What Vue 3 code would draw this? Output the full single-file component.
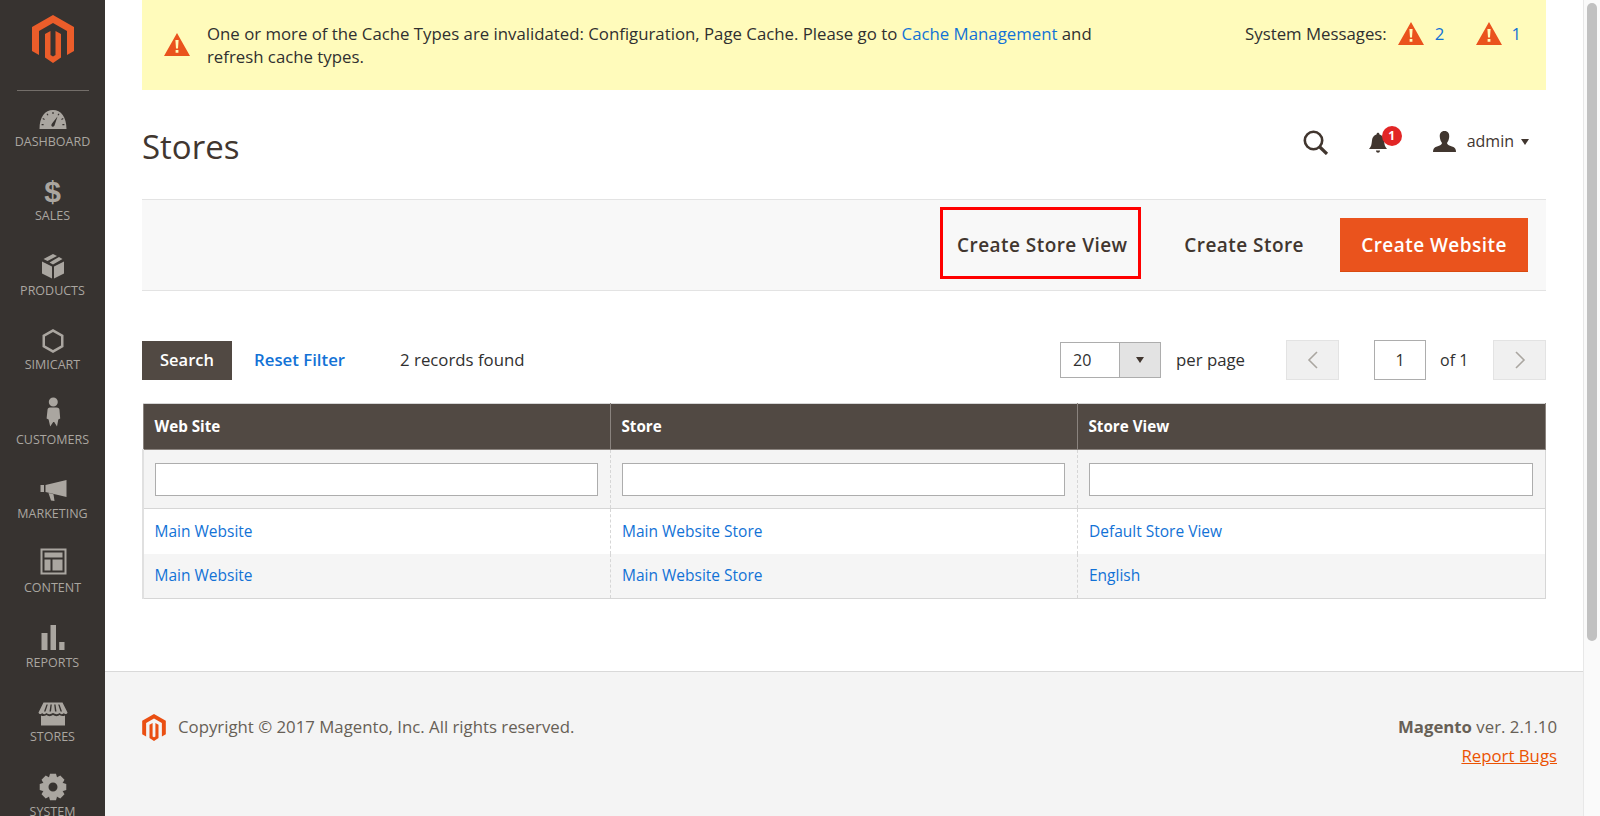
<template>
  <div class="page">
    <!-- sidebar -->
    <aside class="sidebar">
      <div class="logo-wrap">
        <svg class="logo" viewBox="0 0 42 48" width="42" height="48">
          <path :d="logoPath" fill="#eb5d2a" />
        </svg>
      </div>
      <div class="logo-line"></div>
      <div v-for="item in menu" :key="item.label" class="menu-item">
        <div class="menu-icon">
          <span v-if="item.glyph" class="glyph">{{ item.glyph }}</span>
          <svg v-else viewBox="0 0 30 28" width="30" height="28">
            <path :d="item.d" fill="#aaa6a0" fill-rule="evenodd" />
          </svg>
        </div>
        <div class="menu-label">{{ item.label }}</div>
      </div>
    </aside>

    <div class="main">
      <div class="content">
        <!-- system message -->
        <div class="notice">
          <svg class="warn notice-icon" viewBox="0 0 26 23" width="26" height="23">
            <path :d="warnPath" fill="#ea531d" fill-rule="evenodd" />
          </svg>
          <div class="notice-text">
            One or more of the Cache Types are invalidated: Configuration, Page Cache. Please go to
            <a class="link">Cache Management</a> and refresh cache types.
          </div>
          <div class="sys-messages">
            <span>System Messages:</span>
            <svg class="warn warn-a" viewBox="0 0 26 23" width="26" height="23">
              <path :d="warnPath" fill="#ea531d" fill-rule="evenodd" />
            </svg>
            <a class="link count">2</a>
            <svg class="warn warn-b" viewBox="0 0 26 23" width="26" height="23">
              <path :d="warnPath" fill="#ea531d" fill-rule="evenodd" />
            </svg>
            <a class="link count">1</a>
          </div>
        </div>

        <!-- title and admin actions -->
        <div class="title-row">
          <h1 class="title">Stores</h1>
          <div class="admin-actions">
            <svg class="search-icon" viewBox="0 0 26 25" width="26" height="25">
              <circle cx="10.5" cy="10.5" r="8.7" fill="none" stroke="#41362f" stroke-width="2.6" />
              <path d="M16.8 17 L24 24" stroke="#41362f" stroke-width="3.2" fill="none" />
            </svg>
            <div class="bell">
              <svg viewBox="0 0 18 21" width="18" height="21">
                <path d="M0 17 C2.5 14.5 2.5 12 3 8.5 C3.5 4.5 6 3 7.5 2.6 C7.5 0 10.5 0 10.5 2.6 C12 3 14.5 4.5 15 8.5 C15.5 12 15.5 14.5 18 17 Z M7 18.5 H11 C11 21.5 7 21.5 7 18.5 Z" fill="#41362f" />
              </svg>
              <span class="badge">1</span>
            </div>
            <svg class="user-icon" viewBox="0 0 23 21" width="23" height="21">
              <path d="M11.5 0 C15 0 16.5 2.5 16.2 6 C16 8.5 15 10.5 14 12 C14 13.5 16 14.5 19 15.5 C22 16.5 23 18 23 21 H0 C0 18 1 16.5 4 15.5 C7 14.5 9 13.5 9 12 C8 10.5 7 8.5 6.8 6 C6.5 2.5 8 0 11.5 0 Z" fill="#41362f" />
            </svg>
            <span class="admin-name">admin</span>
            <span class="caret"></span>
          </div>
        </div>

        <!-- page actions -->
        <div class="page-actions">
          <button class="action-btn highlighted">Create Store View</button>
          <button class="action-btn plain">Create Store</button>
          <button class="action-btn primary">Create Website</button>
        </div>

        <!-- grid toolbar -->
        <div class="toolbar">
          <button class="search-btn">Search</button>
          <a class="reset">Reset Filter</a>
          <span class="records">2 records found</span>
          <div class="pager">
            <div class="per-select">
              <span class="per-value">20</span>
              <span class="per-arrow"><i></i></span>
            </div>
            <span class="per-label">per page</span>
            <div class="page-btn prev">
              <svg viewBox="0 0 12 20" width="12" height="20"><path d="M10 2 L2 10 L10 18" fill="none" stroke="#aaa6a0" stroke-width="1.6" /></svg>
            </div>
            <div class="page-input">1</div>
            <span class="page-of">of 1</span>
            <div class="page-btn next">
              <svg viewBox="0 0 12 20" width="12" height="20"><path d="M2 2 L10 10 L2 18" fill="none" stroke="#aaa6a0" stroke-width="1.6" /></svg>
            </div>
          </div>
        </div>

        <!-- stores grid -->
        <table class="grid">
          <thead>
            <tr>
              <th v-for="col in columns" :key="col">{{ col }}</th>
            </tr>
          </thead>
          <tbody>
            <tr class="filters">
              <td v-for="col in columns" :key="col"><input class="filter-input" type="text" /></td>
            </tr>
            <tr v-for="(row, i) in rows" :key="i" :class="{ alt: i % 2 === 1 }">
              <td v-for="cell in row" :key="cell"><a class="link">{{ cell }}</a></td>
            </tr>
          </tbody>
        </table>
      </div>

      <!-- footer -->
      <footer class="footer">
        <div class="copyright">
          <svg viewBox="0 0 42 48" width="24" height="27">
            <path :d="logoPath" fill="#ea4f12" />
          </svg>
          <span class="copy-text">Copyright © 2017 Magento, Inc. All rights reserved.</span>
        </div>
        <div class="version">
          <div><b>Magento</b> ver. 2.1.10</div>
          <a class="bugs">Report Bugs</a>
        </div>
      </footer>
    </div>

    <!-- browser scrollbar -->
    <div class="scrollbar"><div class="thumb"></div></div>
  </div>
</template>

<script setup>
const logoPath =
  'M21 0 L42 12 V36 L35 40 V16 L21 8 L7 16 V40 L0 36 V12 Z M13 19 L18.5 16 V40 L21 41.5 L23.5 40 V16 L29 19 V42.5 L21 48 L13 42.5 Z'

const warnPath = 'M13 0 L26 23 H0 Z M11.4 7 H14.6 L14 15.5 H12 Z M11.6 17 H14.4 V19.8 H11.6 Z'

// gear for the system item
const gearPath = () => {
  const cx = 15
  const cy = 13
  let d = ''
  for (let i = 0; i < 8; i++) {
    const a = (i * Math.PI) / 4 - Math.PI / 2
    const pts = [
      [a - 0.42, 10.2],
      [a - 0.22, 13.6],
      [a + 0.22, 13.6],
      [a + 0.42, 10.2]
    ]
    pts.forEach(([t, r], j) => {
      const x = (cx + r * Math.cos(t)).toFixed(2)
      const y = (cy + r * Math.sin(t)).toFixed(2)
      d += (i === 0 && j === 0 ? 'M' : 'L') + x + ' ' + y + ' '
    })
  }
  return d + 'Z M19.5 13 A4.5 4.5 0 1 0 10.5 13 A4.5 4.5 0 1 0 19.5 13 Z'
}

const menu = [
  {
    label: 'Dashboard',
    d: 'M1.5 25 C1.5 13 7 6 15 6 C23 6 28.5 13 28.5 25 Z M19.5 12.5 L14 19.5 C12 22 15 24 16.5 21.5 Z M14.4 8 H15.6 V10 H14.4 Z M8.5 10 L9.5 9.4 L10.5 11 L9.5 11.6 Z M21.5 10 L20.5 9.4 L19.5 11 L20.5 11.6 Z M4.5 15 L5 14 L6.8 15 L6.3 16 Z M25.5 15 L25 14 L23.2 15 L23.7 16 Z M3.6 20 H5.6 V21.2 H3.6 Z M24.4 20 H26.4 V21.2 H24.4 Z'
  },
  { label: 'Sales', glyph: '$' },
  {
    label: 'Products',
    d: 'M4 8.5 L14 13.5 V25.5 L4 20.5 Z M26 8.5 L16 13.5 V25.5 L26 20.5 Z M15 1 L19 3 L9.5 8 L5.5 6 Z M21 4 L24.5 6 L15 11.5 L11.5 9.5 Z'
  },
  {
    label: 'Simicart',
    d: 'M15 2 L25.5 8 V20 L15 26 L4.5 20 V8 Z M15 4.9 L7 9.5 V18.5 L15 23.1 L23 18.5 V9.5 Z'
  },
  {
    label: 'Customers',
    d: 'M19.8 0 A4.5 4.5 0 1 0 10.8 0 A4.5 4.5 0 1 0 19.8 0 Z M9.5 8 Q9.5 5.5 12 5.5 H18.5 Q21.5 5.5 21.5 8 L22.2 16.5 L20.3 17.5 L19 24.5 L16.2 20 L15.2 20 L12.2 24.5 L10.6 17.5 L8.6 16.5 Z'
  },
  {
    label: 'Marketing',
    d: 'M2.5 9 H6 V16 H2.5 Z M7.5 9 L28.5 4 V21 L7.5 16 Z M10.5 17 L15.5 18.2 L16.5 25 L13 24.5 Z'
  },
  {
    label: 'Content',
    d: 'M2.5 -1.4 H28.5 V24.6 H2.5 Z M4.5 0.6 V22.6 H26.5 V0.6 Z M6.5 2.6 H24.5 V7.6 H6.5 Z M6.5 9.6 H12.5 V20.6 H6.5 Z M14.5 9.6 H24.5 V20.6 H14.5 Z'
  },
  {
    label: 'Reports',
    d: 'M3.5 8 H9.5 V25 H3.5 Z M12.5 0 H18 V25 H12.5 Z M21.2 17 H26.5 V25 H21.2 Z'
  },
  {
    label: 'Stores',
    d: 'M5.5 3.5 H24.5 L29.5 13.5 C29 15.5 26.5 15.5 26 14 C25 15.5 22.5 15.5 21.5 14 C20.5 15.5 17 15.5 15 14 C13 15.5 9.5 15.5 8.5 14 C7.5 15.5 5 15.5 4 14 C3.5 15.5 1 15.5 0.5 13.5 Z M8.5 5.5 L6 12.5 H7.5 L9.8 5.5 Z M12.5 5.5 L11.5 12.5 H13 L13.8 5.5 Z M16.2 5.5 L17 12.5 H18.5 L17.5 5.5 Z M20.2 5.5 L22.5 12.5 H24 L21.5 5.5 Z M3 16.5 C5 17.5 7 17 8.5 16 C10 17.5 13 17.5 15 16 C17 17.5 20 17.5 21.5 16 C23 17 25 17.5 27 16.5 V26.5 H3 Z'
  },
  { label: 'System', d: gearPath() }
]

const columns = ['Web Site', 'Store', 'Store View']

const rows = [
  ['Main Website', 'Main Website Store', 'Default Store View'],
  ['Main Website', 'Main Website Store', 'English']
]
</script>

<style>
html,
body {
  margin: 0;
  height: 100%;
  overflow: hidden;
}
</style>

<style scoped>
.page {
  display: flex;
  width: 1600px;
  height: 816px;
  overflow: hidden;
  background: #fff;
  font-family: "Open Sans", "Liberation Sans", sans-serif;
  color: #303030;
}

/* sidebar */
.sidebar {
  width: 105px;
  flex: none;
  background: #373330;
  overflow: hidden;
}

.logo-wrap {
  height: 90px;
  box-sizing: border-box;
  padding-top: 15px;
  display: flex;
  justify-content: center;
}

.logo-line {
  height: 1px;
  margin: 0 16px 0 17px;
  background: #736e69;
}

.menu-item {
  height: 74.4px;
  box-sizing: border-box;
  padding-top: 6px;
  display: flex;
  flex-direction: column;
  align-items: center;
}

.logo-line + .menu-item {
  margin-top: 7px;
}

.menu-icon {
  height: 28px;
  width: 30px;
  display: flex;
  align-items: center;
  justify-content: center;
}

.menu-icon svg {
  overflow: visible;
  display: block;
}

.glyph {
  font-size: 30px;
  font-weight: 700;
  line-height: 28px;
  color: #aaa6a0;
  font-family: "Liberation Sans", sans-serif;
}

.menu-label {
  margin-top: 2px;
  line-height: 16px;
  font-size: 12.5px;
  text-transform: uppercase;
  color: #aaa6a0;
  white-space: nowrap;
}

/* main column */
.main {
  flex: 1;
  min-width: 0;
  display: flex;
  flex-direction: column;
}

.content {
  padding: 0 37px;
}

.link {
  color: #1272d6;
  text-decoration: none;
}

.notice {
  height: 90px;
  box-sizing: border-box;
  background: #fffbbb;
  display: flex;
  align-items: flex-start;
  font-size: 16.8px;
  line-height: 23px;
  padding-top: 22px;
}

.warn {
  display: block;
  flex: none;
}

.notice-icon {
  margin: 11px 17px 0 22px;
}

.notice-text {
  width: 905px;
  color: #303030;
}

.sys-messages {
  margin-left: auto;
  display: flex;
  align-items: flex-start;
  padding-right: 25px;
}

.warn-a {
  margin: 0 11px 0 11px;
}

.warn-b {
  margin: 0 9px 0 32px;
}

.title-row {
  height: 109px;
  display: flex;
  justify-content: space-between;
  align-items: flex-start;
}

.title {
  margin: 37px 0 0;
  font-size: 33px;
  line-height: 40px;
  font-weight: 400;
  color: #41362f;
}

.admin-actions {
  margin-top: 36px;
  height: 30px;
  display: flex;
  align-items: center;
  padding-right: 17px;
  color: #41362f;
}

.search-icon {
  margin-right: 40px;
  margin-top: 2px;
}

.bell {
  position: relative;
  width: 18px;
  height: 21px;
  margin-top: 2px;
  margin-right: 46px;
}

.bell svg {
  display: block;
}

.badge {
  position: absolute;
  left: 13px;
  top: -6px;
  width: 20px;
  height: 20px;
  border-radius: 50%;
  background: #e22626;
  color: #fff;
  font-size: 12px;
  font-weight: 700;
  line-height: 20px;
  text-align: center;
}

.admin-name {
  margin-left: 11px;
  font-size: 16px;
}

.caret {
  margin-left: 7px;
  margin-top: 2px;
  width: 0;
  height: 0;
  border-left: 4.5px solid transparent;
  border-right: 4.5px solid transparent;
  border-top: 6px solid #41362f;
}

/* page actions */
.page-actions {
  height: 92px;
  box-sizing: border-box;
  background: #f8f8f8;
  border-top: 1px solid #e3e3e3;
  border-bottom: 1px solid #e3e3e3;
  display: flex;
  justify-content: flex-end;
  align-items: center;
  padding-right: 18px;
}

.action-btn {
  font-family: inherit;
  font-size: 19px;
  font-weight: 600;
  letter-spacing: 0.45px;
  border: 0;
  background: none;
  color: #41362f;
  padding: 0;
  white-space: nowrap;
}

.highlighted {
  align-self: flex-start;
  margin-top: 7px;
  width: 201px;
  height: 72px;
  box-sizing: border-box;
  border: 3px solid #f00;
  padding: 3px 0 0 3px;
}

.plain {
  margin-left: 43px;
}

.primary {
  margin-left: 36px;
  width: 188px;
  height: 54px;
  background: #ea531d;
  color: #fff;
  border-bottom: 1px solid #d94a10;
}

/* toolbar */
.toolbar {
  margin-top: 49px;
  height: 40px;
  display: flex;
  align-items: center;
  font-size: 16.8px;
}

.search-btn {
  width: 90px;
  height: 39px;
  border: 0;
  background: #514943;
  color: #fff;
  font-family: inherit;
  font-size: 16.5px;
  font-weight: 600;
  padding: 0 0 2px;
}

.reset {
  margin-left: 22px;
  margin-bottom: 2px;
  color: #1272d6;
  font-weight: 600;
}

.records {
  margin-left: 55px;
  margin-bottom: 2px;
  color: #303030;
}

.pager {
  margin-left: auto;
  display: flex;
  align-items: center;
}

.per-select {
  width: 101px;
  height: 36px;
  box-sizing: border-box;
  border: 1px solid #adadad;
  display: flex;
  background: #fff;
}

.per-value {
  flex: 1;
  padding-left: 12px;
  line-height: 34px;
  font-size: 16px;
}

.per-arrow {
  width: 40px;
  background: #e3e3e3;
  border-left: 1px solid #adadad;
  display: flex;
  align-items: center;
  justify-content: center;
}

.per-arrow i {
  width: 0;
  height: 0;
  border-left: 4.5px solid transparent;
  border-right: 4.5px solid transparent;
  border-top: 6px solid #41362f;
}

.per-label {
  margin-left: 15px;
  margin-bottom: 2px;
  width: 68px;
  white-space: nowrap;
}

.page-btn {
  width: 53px;
  height: 40px;
  box-sizing: border-box;
  background: #f0f0f0;
  border: 1px solid #e3e3e3;
  display: flex;
  align-items: center;
  justify-content: center;
}

.prev {
  margin-left: 42px;
}

.page-input {
  margin-left: 35px;
  width: 52px;
  height: 40px;
  box-sizing: border-box;
  border: 1px solid #adadad;
  text-align: center;
  line-height: 38px;
  font-size: 16px;
}

.page-of {
  margin-left: 14px;
  width: 53px;
  font-size: 16px;
}

/* grid */
.grid {
  margin-top: 23px;
  width: 100%;
  border-collapse: collapse;
  table-layout: fixed;
  font-size: 15.5px;
}

.grid th {
  height: 46px;
  box-sizing: border-box;
  background: #514943;
  color: #fff;
  font-weight: 700;
  text-align: left;
  padding: 0 12px 1px 11px;
  border: 1px solid #8a837e;
  border-top-color: #d6d6d6;
  font-size: 15.2px;
}

.grid th:nth-child(1),
.grid th:nth-child(2) {
  width: 467px;
}

.grid td {
  height: 45px;
  box-sizing: border-box;
  padding: 0 12px 0 11.5px;
  border-left: 1px dashed #d6d6d6;
  border-right: 1px dashed #d6d6d6;
}

.grid td:first-child {
  border-left: 2px solid #e0e0e0;
  padding-left: 10.5px;
}

.grid td:last-child {
  border-right: 1px solid #d6d6d6;
}

.filters td {
  height: 59px;
  background: #f4f4f4;
  border-bottom: 1px solid #d6d6d6;
}

.alt td {
  background: #f5f5f5;
  border-bottom: 1px solid #d6d6d6;
  padding-bottom: 2px;
}

.filter-input {
  display: block;
  width: 100%;
  height: 33px;
  box-sizing: border-box;
  border: 1px solid #adadad;
  background: #fff;
  margin: 0;
  padding: 0;
}

/* footer */
.footer {
  margin-top: 72px;
  flex: 1;
  background: #f4f4f4;
  border-top: 1px solid #d9d9d9;
  display: flex;
  justify-content: space-between;
  align-items: flex-start;
  padding: 42px 26px 0 37px;
  font-size: 16.8px;
  color: #676056;
}

.copyright {
  display: flex;
  align-items: center;
  gap: 12px;
}

.copy-text {
  margin-bottom: 2px;
}

.version {
  margin-top: -1px;
  text-align: right;
  line-height: 28.5px;
}

.version b {
  font-weight: 700;
}

.bugs {
  color: #eb5202;
  text-decoration: underline;
}

/* fake browser scrollbar */
.scrollbar {
  width: 17px;
  flex: none;
  box-sizing: border-box;
  background: #fafafa;
  border-left: 1px solid #e8e8e8;
  padding: 3px 3px 0 3px;
}

.thumb {
  height: 638px;
  border-radius: 5px;
  background: #c1c1c1;
}
</style>
